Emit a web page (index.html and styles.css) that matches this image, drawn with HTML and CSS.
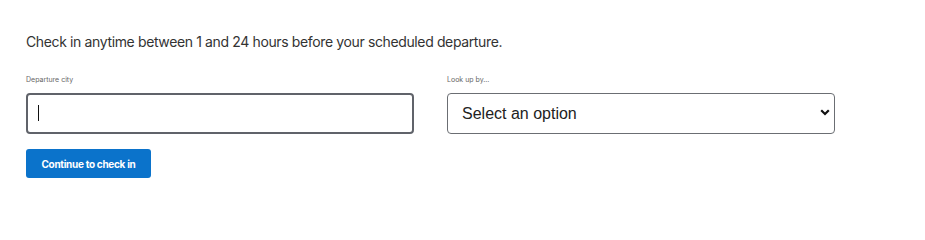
FILE: index.html
```html
<!DOCTYPE html>
<html lang="en">
<head>
<meta charset="utf-8">
<title>Check in</title>
<link rel="stylesheet" href="styles.css">
</head>
<body>
<main class="checkin">
  <p class="intro">Check in anytime between 1 and 24 hours before your scheduled departure.</p>
  <form class="fields">
    <div class="field">
      <label class="label" for="city">Departure city</label>
      <div class="input-wrap">
        <input class="text-input" id="city" type="text">
        <span class="caret"></span>
      </div>
    </div>
    <div class="field">
      <label class="label" for="lookup">Look up by...</label>
      <div class="select-wrap">
        <select class="select" id="lookup">
          <option>Select an option</option>
        </select>
        <svg class="chevron" width="10" height="7" viewBox="0 0 10 7"><path d="M1.2 1.2 L5 5 L8.8 1.2" fill="none" stroke="#111" stroke-width="2.2"/></svg>
      </div>
    </div>
  </form>
  <button class="btn" type="button">Continue to check in</button>
</main>
</body>
</html>
```
FILE: styles.css
```css
html, body {
  margin: 0;
  padding: 0;
  background: #fff;
}
.checkin {
  padding: 33px 26px 0 26px;
  font-family: Inter, "Noto Sans", sans-serif;
}
.intro {
  margin: 0;
  font-size: 14px;
  line-height: 17px;
  color: #333;
  letter-spacing: -0.37px;
}
.fields {
  display: grid;
  grid-template-columns: 388px 388px;
  column-gap: 33px;
  margin-top: 25px;
}
.field {
  display: flex;
  flex-direction: column;
}
.label {
  font-size: 7px;
  line-height: 9px;
  color: #666;
  margin-bottom: 9px;
}
.input-wrap, .select-wrap {
  position: relative;
}
.text-input {
  display: block;
  box-sizing: border-box;
  width: 388px;
  height: 41px;
  border: 2px solid #60636a;
  border-radius: 4px;
  margin: 0;
  padding: 0 12px;
  outline: none;
  background: #fff;
}
.caret {
  position: absolute;
  left: 12px;
  top: 12px;
  width: 1px;
  height: 16px;
  background: #111;
}
.select {
  display: block;
  box-sizing: border-box;
  width: 388px;
  height: 41px;
  border: 1px solid #6b6e73;
  border-radius: 4px;
  margin: 0;
  padding: 0 14px;
  background: #fff;
  appearance: none;
  -webkit-appearance: none;
  font-family: "Liberation Sans", Arial, sans-serif;
  font-size: 16px;
  color: #222;
}
.chevron {
  position: absolute;
  right: 5px;
  top: 16px;
  pointer-events: none;
}
.btn {
  display: block;
  margin-top: 15px;
  width: 125px;
  height: 29px;
  border: none;
  border-radius: 3px;
  background: #0b73cb;
  color: #fff;
  font-family: Inter, "Noto Sans", sans-serif;
  font-weight: 700;
  font-size: 10px;
  padding: 0;
  letter-spacing: -0.3px;
}
```
